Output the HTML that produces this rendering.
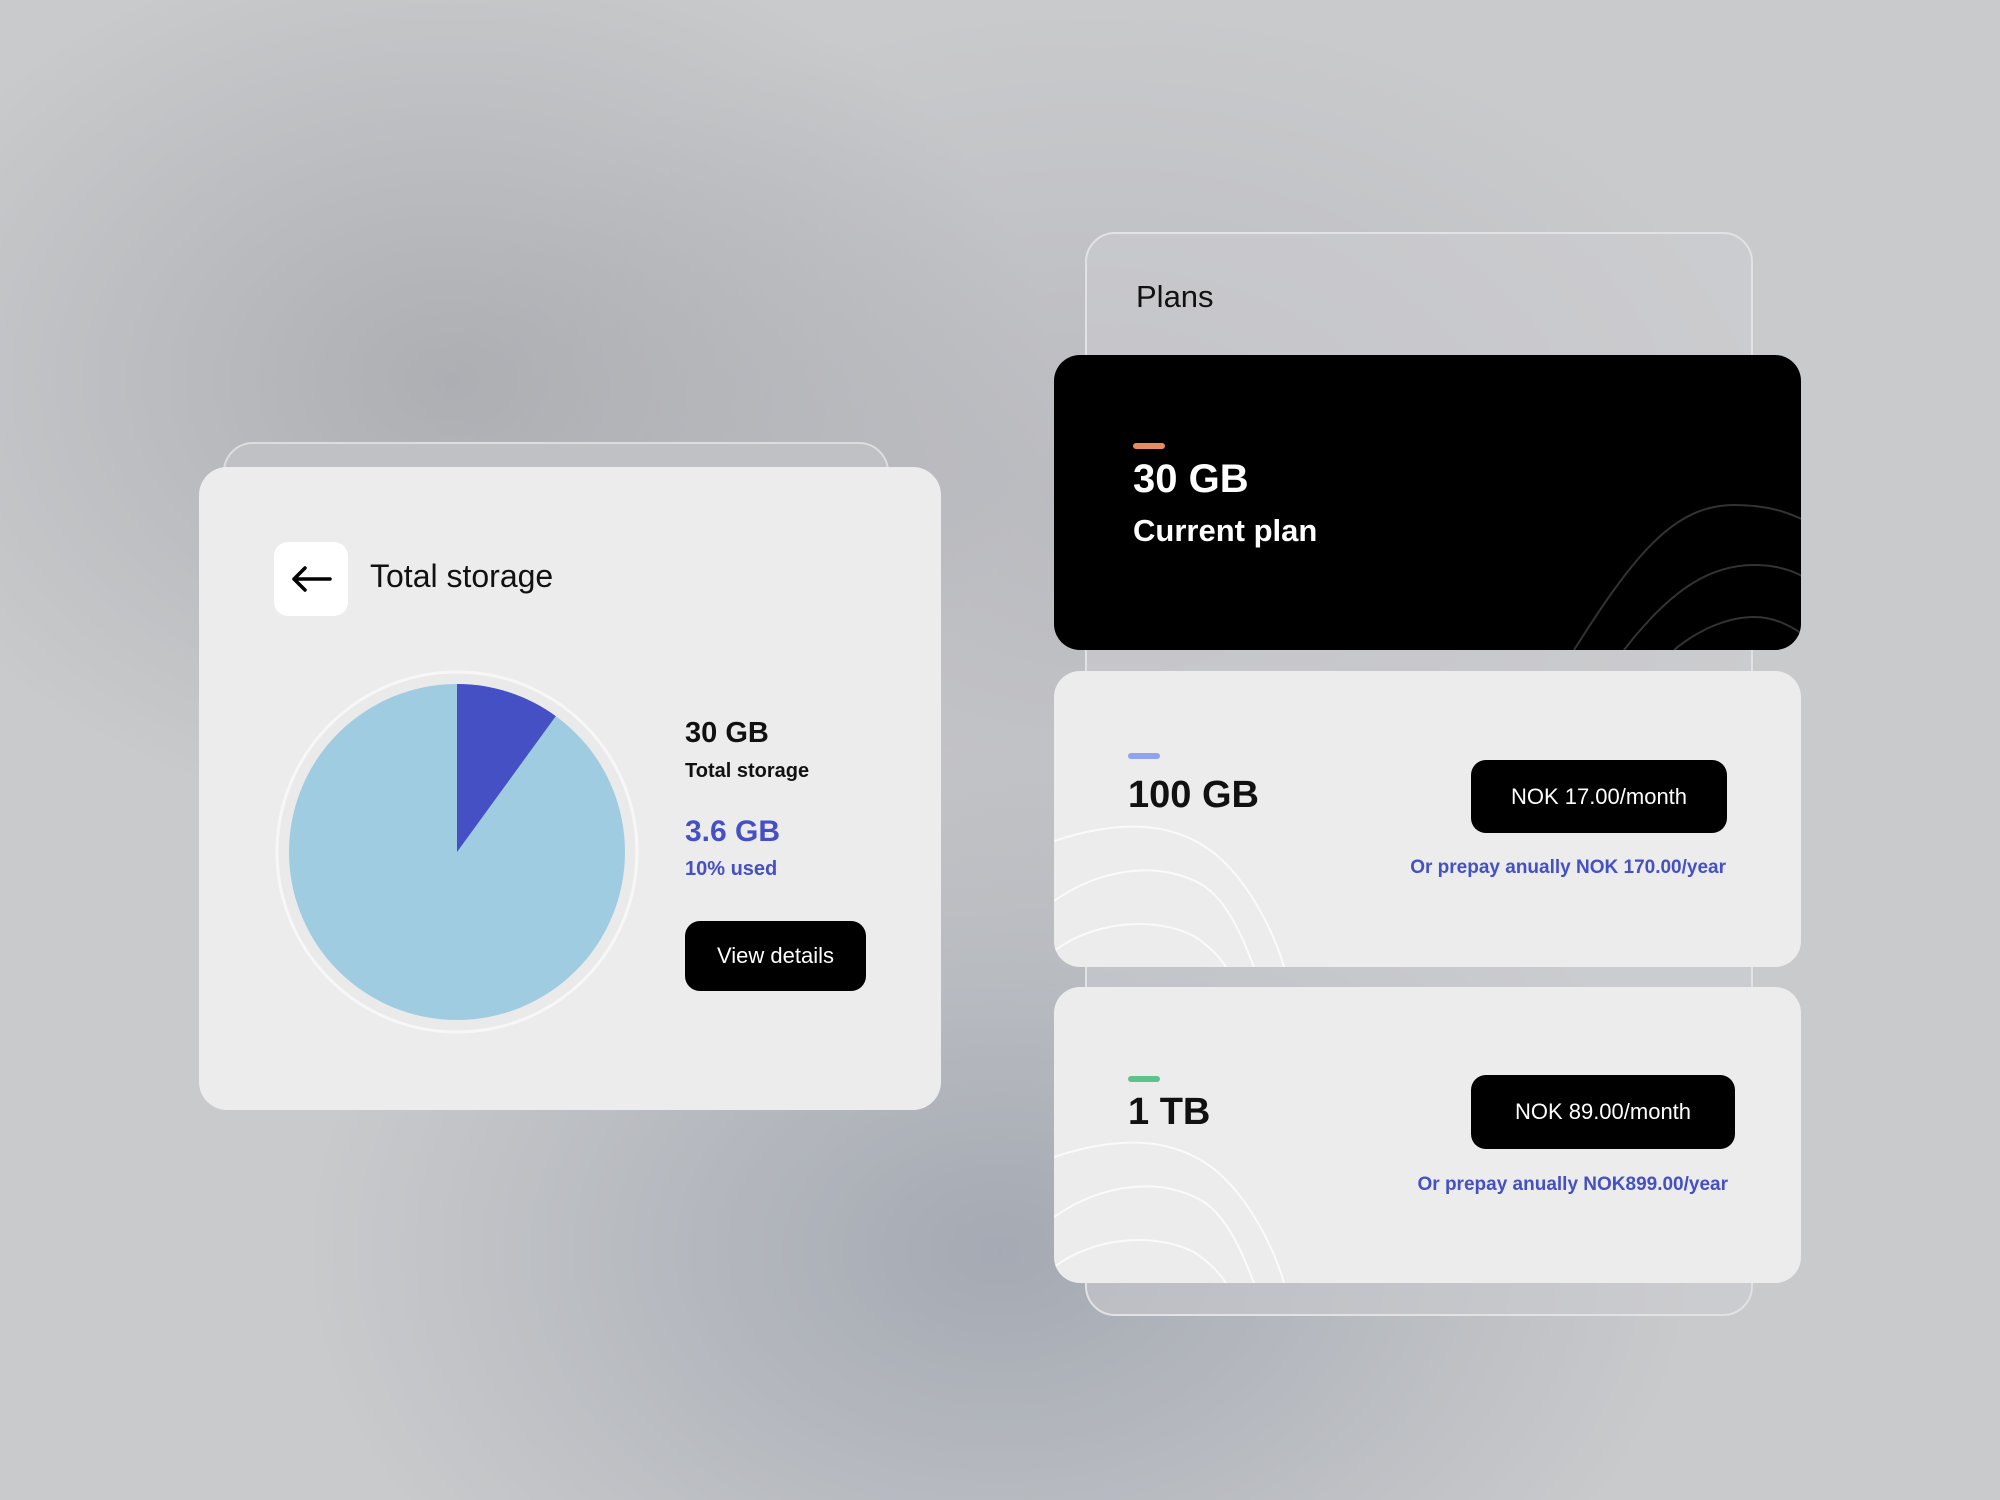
<!DOCTYPE html>
<html><head><meta charset="utf-8"><style>
*{margin:0;padding:0;box-sizing:border-box}
body{width:2000px;height:1500px;overflow:hidden;font-family:"Liberation Sans",sans-serif;position:relative;
background:
radial-gradient(ellipse 600px 450px at 450px 380px,rgba(150,152,158,0.55),rgba(150,152,158,0) 100%),
radial-gradient(ellipse 700px 500px at 1000px 1250px,rgba(140,148,162,0.6),rgba(140,148,162,0) 100%),
radial-gradient(ellipse 700px 500px at 1100px 500px,rgba(170,170,178,0.5),rgba(170,170,178,0) 100%),
#c9cacc;}
.abs{position:absolute}
.card{position:absolute;background:#ececec;border-radius:26px}
.btn{position:absolute;background:#000;color:#fff;border-radius:15px;display:flex;align-items:center;justify-content:center;font-size:22px}
.link{position:absolute;color:#4450c4;font-size:19px;font-weight:bold;text-align:right;white-space:nowrap}
</style></head><body>
<div class="abs" style="left:223px;top:442px;width:666px;height:100px;border:2px solid #ddd;border-radius:30px;background:#c0c1c4"></div>
<div class="card" style="left:199px;top:467px;width:742px;height:643px;border-radius:28px"></div>
<div class="abs" style="left:274px;top:542px;width:74px;height:74px;background:#fff;border-radius:14px"></div>
<svg class="abs" style="left:274px;top:542px" width="74" height="74"><path d="M20 37 H56 M20 37 L31 26 M20 37 L31 48" stroke="#000" stroke-width="3.5" fill="none" stroke-linecap="round"/></svg>
<div class="abs" style="left:370px;top:558px;font-size:32px;color:#111">Total storage</div>
<svg class="abs" style="left:275px;top:670px" width="364" height="364">
<circle cx="182" cy="182" r="180" fill="#eaeaea" stroke="#f7f7f7" stroke-width="3"/>
<circle cx="182" cy="182" r="168" fill="#a0cce2"/>
<path d="M182 182 L182 14 A168 168 0 0 1 280.8 46.1 Z" fill="#4450c4"/>
</svg>
<div class="abs" style="left:685px;top:717px;font-size:29px;font-weight:bold;color:#111">30 GB</div>
<div class="abs" style="left:685px;top:760px;font-size:20px;font-weight:bold;color:#111">Total storage</div>
<div class="abs" style="left:685px;top:815px;font-size:30px;font-weight:bold;color:#4450c4">3.6 GB</div>
<div class="abs" style="left:685px;top:858px;font-size:20px;font-weight:bold;color:#4450c4">10% used</div>
<div class="btn" style="left:685px;top:921px;width:181px;height:70px">View details</div>
<div class="abs" style="left:1085px;top:232px;width:668px;height:1084px;border:2px solid #e2e2e4;border-radius:30px;background:rgba(205,205,210,0.5)"></div>
<div class="abs" style="left:1136px;top:279px;font-size:31px;color:#111">Plans</div>
<div class="card" style="left:1054px;top:355px;width:747px;height:295px;background:#000;overflow:hidden">
<svg class="abs" style="left:0;top:0" width="747" height="295"><g stroke="#333" stroke-width="2" fill="none">
<path d="M520 295 C580 200 620 150 680 150 C720 150 740 160 760 170"/>
<path d="M570 295 C620 230 660 210 700 210 C730 210 750 220 760 230"/>
<path d="M620 295 C650 270 680 262 700 262 C720 262 735 270 750 280"/></g></svg>
<div class="abs" style="left:79px;top:88px;width:32px;height:6px;border-radius:3px;background:#e88d5f"></div>
<div class="abs" style="left:79px;top:102px;font-size:40px;font-weight:bold;color:#fff">30 GB</div>
<div class="abs" style="left:79px;top:158px;font-size:31px;font-weight:bold;color:#fff">Current plan</div>
</div>
<div class="card" style="left:1054px;top:671px;width:747px;height:296px;overflow:hidden">
<svg class="abs" style="left:0;top:0" width="747" height="296"><g stroke="#fafafa" stroke-width="2" fill="none">
<path d="M0 170 C60 150 110 150 150 175 C190 200 220 260 230 296"/>
<path d="M0 230 C50 195 110 190 150 215 C175 232 190 270 200 296"/>
<path d="M0 280 C40 250 100 245 140 265 C155 275 165 285 172 296"/></g></svg>
<div class="abs" style="left:74px;top:82px;width:32px;height:6px;border-radius:3px;background:#8fa3f0"></div>
<div class="abs" style="left:74px;top:103px;font-size:38px;font-weight:bold;color:#111">100 GB</div>
</div>
<div class="btn" style="left:1471px;top:760px;width:256px;height:73px">NOK 17.00/month</div>
<div class="link" style="right:274px;top:857px">Or prepay anually NOK 170.00/year</div>
<div class="card" style="left:1054px;top:987px;width:747px;height:296px;overflow:hidden">
<svg class="abs" style="left:0;top:0" width="747" height="296"><g stroke="#fafafa" stroke-width="2" fill="none">
<path d="M0 170 C60 150 110 150 150 175 C190 200 220 260 230 296"/>
<path d="M0 230 C50 195 110 190 150 215 C175 232 190 270 200 296"/>
<path d="M0 280 C40 250 100 245 140 265 C155 275 165 285 172 296"/></g></svg>
<div class="abs" style="left:74px;top:89px;width:32px;height:6px;border-radius:3px;background:#5cc48a"></div>
<div class="abs" style="left:74px;top:104px;font-size:38px;font-weight:bold;color:#111">1 TB</div>
</div>
<div class="btn" style="left:1471px;top:1075px;width:264px;height:74px">NOK 89.00/month</div>
<div class="link" style="right:272px;top:1174px">Or prepay anually NOK899.00/year</div>
</body></html>
